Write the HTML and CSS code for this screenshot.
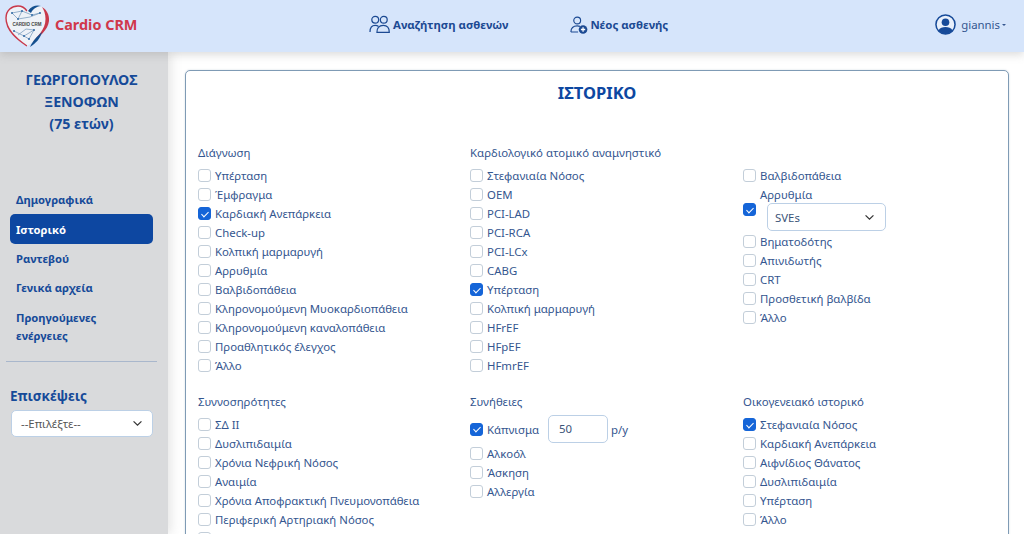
FILE: index.html
```html
<!DOCTYPE html>
<html lang="el">
<head>
<meta charset="utf-8">
<title>Cardio CRM</title>
<link rel="stylesheet" href="styles.css">
</head>
<body>
<header class="topbar">
  <a class="brand">
    <svg class="logo" viewBox="0 0 46 46" width="46" height="46" aria-hidden="true">
      <path d="M23 43 C14 37 2 28 2 15 C2 7 8 3 14 3 C18 3 21 5 23 8" fill="#eef2f8" stroke="#c8394b" stroke-width="1.400"/>
      <path d="M23 8 C26 4 29 3 33 3 C39 3 44 8 44 16 C44 28 32 37 23 43" fill="#eef2f8" stroke="none"/>
      <path d="M24 8 C27 3 33 1.500 37 3 C32 3.500 29 6 27 10 Z" fill="#14508f"/>
      <path d="M38 4 C43 7 45.500 12 45 18 C44 27 35 34 29 39 C33 33 41.500 27 41.500 16 C41.500 11 40 7 38 4 Z" fill="#c8394b"/>
      <path d="M26 44 C29 37 33 34 38 29 C36 36 32 40 26 44 Z" fill="#14508f"/>
      <path d="M8 10 L18 8 L28 12 L36 10 M8 10 L14 16 L26 14 L36 10 M18 8 L14 16 M10 28 L20 33 L30 27 L25 36 L20 33 M14 32 L22 26 L30 27" fill="none" stroke="#6e93b8" stroke-width=".7"/>
      <g fill="#2f6aa5"><circle cx="8" cy="10" r="1"/><circle cx="18" cy="8" r="1"/><circle cx="28" cy="12" r="1"/><circle cx="36" cy="10" r="1"/><circle cx="14" cy="16" r="1"/><circle cx="10" cy="28" r="1"/><circle cx="20" cy="33" r="1"/><circle cx="30" cy="27" r="1"/><circle cx="25" cy="36" r="1"/></g>
      <text x="23" y="22.500" text-anchor="middle" class="logo-text">CARDIO CRM</text>
    </svg>
    <span class="brand-name">Cardio CRM</span>
  </a>
  <nav class="topnav">
    <a class="topnav-link link-search">
      <svg viewBox="0 0 22 20" width="21" height="19" fill="none" stroke="#1c4a93" stroke-width="1.300" aria-hidden="true">
        <circle cx="6.500" cy="5" r="3.600"/><circle cx="15.500" cy="5" r="3.600"/>
        <path d="M1 17.800 C1 13 3 11 6.500 11 C8 11 9 11.400 10 12.200"/>
        <path d="M8.300 18.300 C8 14 10.500 11 15 11 C19 11 21.300 14 21.300 18.300 Z"/>
      </svg>
      <span>Αναζήτηση ασθενών</span>
    </a>
    <a class="topnav-link link-new">
      <svg viewBox="0 0 20 20" width="18" height="18" fill="none" stroke="#1c4a93" stroke-width="1.300" aria-hidden="true">
        <circle cx="8" cy="5" r="3.800"/>
        <path d="M1 17.800 C1 13.500 3.500 11 8 11 C9 11 10 11.100 11 11.500 M1 17.800 H9"/>
        <circle cx="14.500" cy="15" r="4.800" fill="#1c4a93" stroke="none"/>
        <path d="M14.500 12.600 V17.400 M12.100 15 H16.900" stroke="#fff" stroke-width="1.400"/>
      </svg>
      <span>Νέος ασθενής</span>
    </a>
  </nav>
  <a class="user">
    <svg viewBox="0 0 22 22" width="21" height="21" aria-hidden="true">
      <circle cx="11" cy="11" r="10" fill="#e9f0fb" stroke="#164a99" stroke-width="1.600"/>
      <circle cx="11" cy="8.600" r="4" fill="#164a99"/>
      <path d="M3.600 17.400 C5 14.400 8 13.600 11 13.600 C14 13.600 17 14.400 18.400 17.400 C16.500 19.800 14 21 11 21 C8 21 5.500 19.800 3.600 17.400 Z" fill="#164a99"/>
    </svg>
    <span>giannis</span><i class="caret"></i>
  </a>
</header>

<div class="shell">
  <aside class="sidebar">
    <h2 class="patient">ΓΕΩΡΓΟΠΟΥΛΟΣ<br>ΞΕΝΟΦΩΝ<br>(75 ετών)</h2>
    <ul class="sidenav">
      <li><a>Δημογραφικά</a></li>
      <li><a class="active">Ιστορικό</a></li>
      <li><a>Ραντεβού</a></li>
      <li><a>Γενικά αρχεία</a></li>
      <li><a>Προηγούμενες ενέργειες</a></li>
    </ul>
    <hr class="divider">
    <div class="visits">
      <h3>Επισκέψεις</h3>
      <div class="select select-side"><span>--Επιλέξτε--</span><svg class="chev" viewBox="0 0 12 8" width="11" height="7"><path d="M1.500 1.500 L6 6 L10.500 1.500" fill="none" stroke="#333" stroke-width="1.400"/></svg></div>
    </div>
  </aside>

  <main class="content">
    <section class="card">
      <h1 class="title">ΙΣΤΟΡΙΚΟ</h1>
      <div class="grid">
        <div class="col">
          <h4>Διάγνωση</h4>
          <label class="row"><i class="cb"></i>Υπέρταση</label>
          <label class="row"><i class="cb"></i>Έμφραγμα</label>
          <label class="row"><i class="cb on"></i>Καρδιακή Ανεπάρκεια</label>
          <label class="row"><i class="cb"></i>Check-up</label>
          <label class="row"><i class="cb"></i>Κολπική μαρμαρυγή</label>
          <label class="row"><i class="cb"></i>Αρρυθμία</label>
          <label class="row"><i class="cb"></i>Βαλβιδοπάθεια</label>
          <label class="row"><i class="cb"></i>Κληρονομούμενη Μυοκαρδιοπάθεια</label>
          <label class="row"><i class="cb"></i>Κληρονομούμενη καναλοπάθεια</label>
          <label class="row"><i class="cb"></i>Προαθλητικός έλεγχος</label>
          <label class="row"><i class="cb"></i>Άλλο</label>
        </div>
        <div class="col">
          <h4>Καρδιολογικό ατομικό αναμνηστικό</h4>
          <label class="row"><i class="cb"></i>Στεφανιαία Νόσος</label>
          <label class="row"><i class="cb"></i>ΟΕΜ</label>
          <label class="row"><i class="cb"></i>PCI-LAD</label>
          <label class="row"><i class="cb"></i>PCI-RCA</label>
          <label class="row"><i class="cb"></i>PCI-LCx</label>
          <label class="row"><i class="cb"></i>CABG</label>
          <label class="row"><i class="cb on"></i>Υπέρταση</label>
          <label class="row"><i class="cb"></i>Κολπική μαρμαρυγή</label>
          <label class="row"><i class="cb"></i>HFrEF</label>
          <label class="row"><i class="cb"></i>HFpEF</label>
          <label class="row"><i class="cb"></i>HFmrEF</label>
        </div>
        <div class="col">
          <h4>&nbsp;</h4>
          <label class="row"><i class="cb"></i>Βαλβιδοπάθεια</label>
          <div class="row-arr">
            <span class="arr-label">Αρρυθμία</span>
            <div class="arr-control"><i class="cb on"></i>
              <div class="select select-svs"><span>SVEs</span><svg class="chev" viewBox="0 0 12 8" width="11" height="7"><path d="M1.500 1.500 L6 6 L10.500 1.500" fill="none" stroke="#333" stroke-width="1.400"/></svg></div>
            </div>
          </div>
          <label class="row"><i class="cb"></i>Βηματοδότης</label>
          <label class="row"><i class="cb"></i>Απινιδωτής</label>
          <label class="row"><i class="cb"></i>CRT</label>
          <label class="row"><i class="cb"></i>Προσθετική βαλβίδα</label>
          <label class="row"><i class="cb"></i>Άλλο</label>
        </div>
        <div class="col col-low">
          <h4>Συννοσηρότητες</h4>
          <label class="row"><i class="cb"></i>ΣΔ ΙΙ</label>
          <label class="row"><i class="cb"></i>Δυσλιπιδαιμία</label>
          <label class="row"><i class="cb"></i>Χρόνια Νεφρική Νόσος</label>
          <label class="row"><i class="cb"></i>Αναιμία</label>
          <label class="row"><i class="cb"></i>Χρόνια Αποφρακτική Πνευμονοπάθεια</label>
          <label class="row"><i class="cb"></i>Περιφερική Αρτηριακή Νόσος</label>
          <label class="row"><i class="cb"></i></label>
        </div>
        <div class="col col-low">
          <h4>Συνήθειες</h4>
          <div class="row-smoke"><i class="cb on"></i><span>Κάπνισμα</span><span class="num">50</span><span class="unit">p/y</span></div>
          <label class="row"><i class="cb"></i>Αλκοόλ</label>
          <label class="row"><i class="cb"></i>Άσκηση</label>
          <label class="row"><i class="cb"></i>Αλλεργία</label>
        </div>
        <div class="col col-low">
          <h4>Οικογενειακό ιστορικό</h4>
          <label class="row"><i class="cb on"></i>Στεφανιαία Νόσος</label>
          <label class="row"><i class="cb"></i>Καρδιακή Ανεπάρκεια</label>
          <label class="row"><i class="cb"></i>Αιφνίδιος Θάνατος</label>
          <label class="row"><i class="cb"></i>Δυσλιπιδαιμία</label>
          <label class="row"><i class="cb"></i>Υπέρταση</label>
          <label class="row"><i class="cb"></i>Άλλο</label>
        </div>
      </div>
    </section>
  </main>
</div>
</body>
</html>
```

FILE: styles.css
```css
* { box-sizing: border-box; }
html, body { margin: 0; height: 534px; overflow: hidden; }
body {
  background: #fff;
  color: #34568f;
  font-family: "Noto Sans", "Open Sans", sans-serif;
  font-size: 11.400px;
  display: flex;
  flex-direction: column;
}
a { text-decoration: none; color: inherit; }

.topbar {
  position: relative;
  z-index: 2;
  height: 52px;
  flex: none;
  display: flex;
  align-items: center;
  padding-bottom: 3px;
  background: #d6e5fb;
  box-shadow: 0 3px 8px rgba(120, 120, 120, .25);
}
.brand { display: flex; align-items: center; width: 369px; padding-left: 4px; }
.logo { flex: none; display: block; margin-right: 5px; position: relative; top: 1px; }
.logo-text { font-size: 4.500px; font-weight: 700; fill: #444; font-family: "Liberation Sans", sans-serif; }
.brand-name { color: #d0384b; font-weight: 700; font-size: 14.400px; }
.topnav { display: flex; align-items: center; flex: 1; }
.topnav-link { display: flex; align-items: center; gap: 3px; color: #1c4a93; font-weight: 700; font-size: 11.400px; }
.link-search { margin-right: 62px; }
.link-new { gap: 2px; }
.user { display: flex; align-items: center; gap: 5px; color: #34568f; font-size: 11.400px; margin-right: 18px; }
.caret { width: 0; height: 0; border: 2.500px solid transparent; border-top-color: #34568f; border-bottom: 0; margin-left: -3px; }

.shell { flex: 1; display: flex; min-height: 0; }
.sidebar { width: 168px; flex: none; background: #d9dadc; padding: 17px 0 0; box-shadow: 3px 0 10px rgba(150, 150, 150, .25); }
.patient { margin: 0; color: #164a99; text-align: center; font-size: 14.200px; font-weight: 700; line-height: 22px; padding-right: 5px; }
.sidenav { list-style: none; margin: 0; padding: 50px 15px 0 10px; }
.sidenav a { display: block; padding: 6px; color: #164a99; font-weight: 700; font-size: 11.200px; line-height: 18px; border-radius: 5px; margin-bottom: -.5px; }
.sidenav a.active { background: #0d47a1; color: #fff; margin: -1px 0 -.5px; padding: 7px 6px 5px; }
.divider { border: 0; border-top: 1px solid #a9b7cc; margin: 11px 11px 0 6px; }
.visits { padding: 25px 15px 0 11px; }
.visits h3 { margin: 0 0 5px -1px; color: #164a99; font-size: 13.500px; font-weight: 700; line-height: 18px; }

.select { display: flex; align-items: center; justify-content: space-between; background: #fff; border: 1px solid #bcd0e6; border-radius: 5px; }
.select-side { height: 27px; padding: 0 9px; color: #555; font-size: 11.400px; }
.select-svs { width: 119px; height: 28px; padding: 0 10px 0 7px; color: #3b5478; }
.chev { flex: none; }

.content { flex: 1; padding: 18px 15px 0 17px; min-width: 0; }
.card { border: 1px solid #7f9bb5; border-radius: 5px; background: #fff; height: 700px; padding-top: 11px; box-shadow: 0 0 2px rgba(100, 130, 160, .3); }
.title { margin: 0; text-align: center; color: #0d47a1; font-size: 16.500px; font-weight: 700; line-height: 22px; }
.grid { display: grid; grid-template-columns: 272px 273px 273px; padding: 39px 0 0 12px; }
.col h4 { margin: 0 0 4px; font-weight: 400; font-size: 11.400px; line-height: 19px; }
.col-low { padding-top: 17px; }
.row { display: flex; align-items: center; height: 19px; white-space: nowrap; }
.cb { flex: none; width: 13px; height: 13px; margin-right: 4px; background: #fff; border: 1px solid #c3ced9; border-radius: 3px; display: block; }
.cb.on { background: #1565d8; border-color: #1565d8; position: relative; }
.cb.on::after { content: ""; position: absolute; left: 3.500px; top: 1.500px; width: 3px; height: 6px; border: solid #fff; border-width: 0 1.500px 1.500px 0; transform: rotate(45deg); }
.row-arr { display: block; }
.arr-label { display: block; padding-left: 17px; line-height: 19px; height: 19px; }
.arr-control { display: flex; align-items: flex-start; height: 28px; margin: -1px 0 1px; }
.arr-control .cb { margin-right: 11px; }
.row-smoke { display: flex; align-items: center; height: 28px; margin: 1px 0; }
.row-smoke .num { width: 60px; height: 28px; line-height: 26px; border: 1px solid #bcd0e6; border-radius: 5px; padding-left: 10px; margin: 0 3px 0 9px; color: #3b5478; }
```
